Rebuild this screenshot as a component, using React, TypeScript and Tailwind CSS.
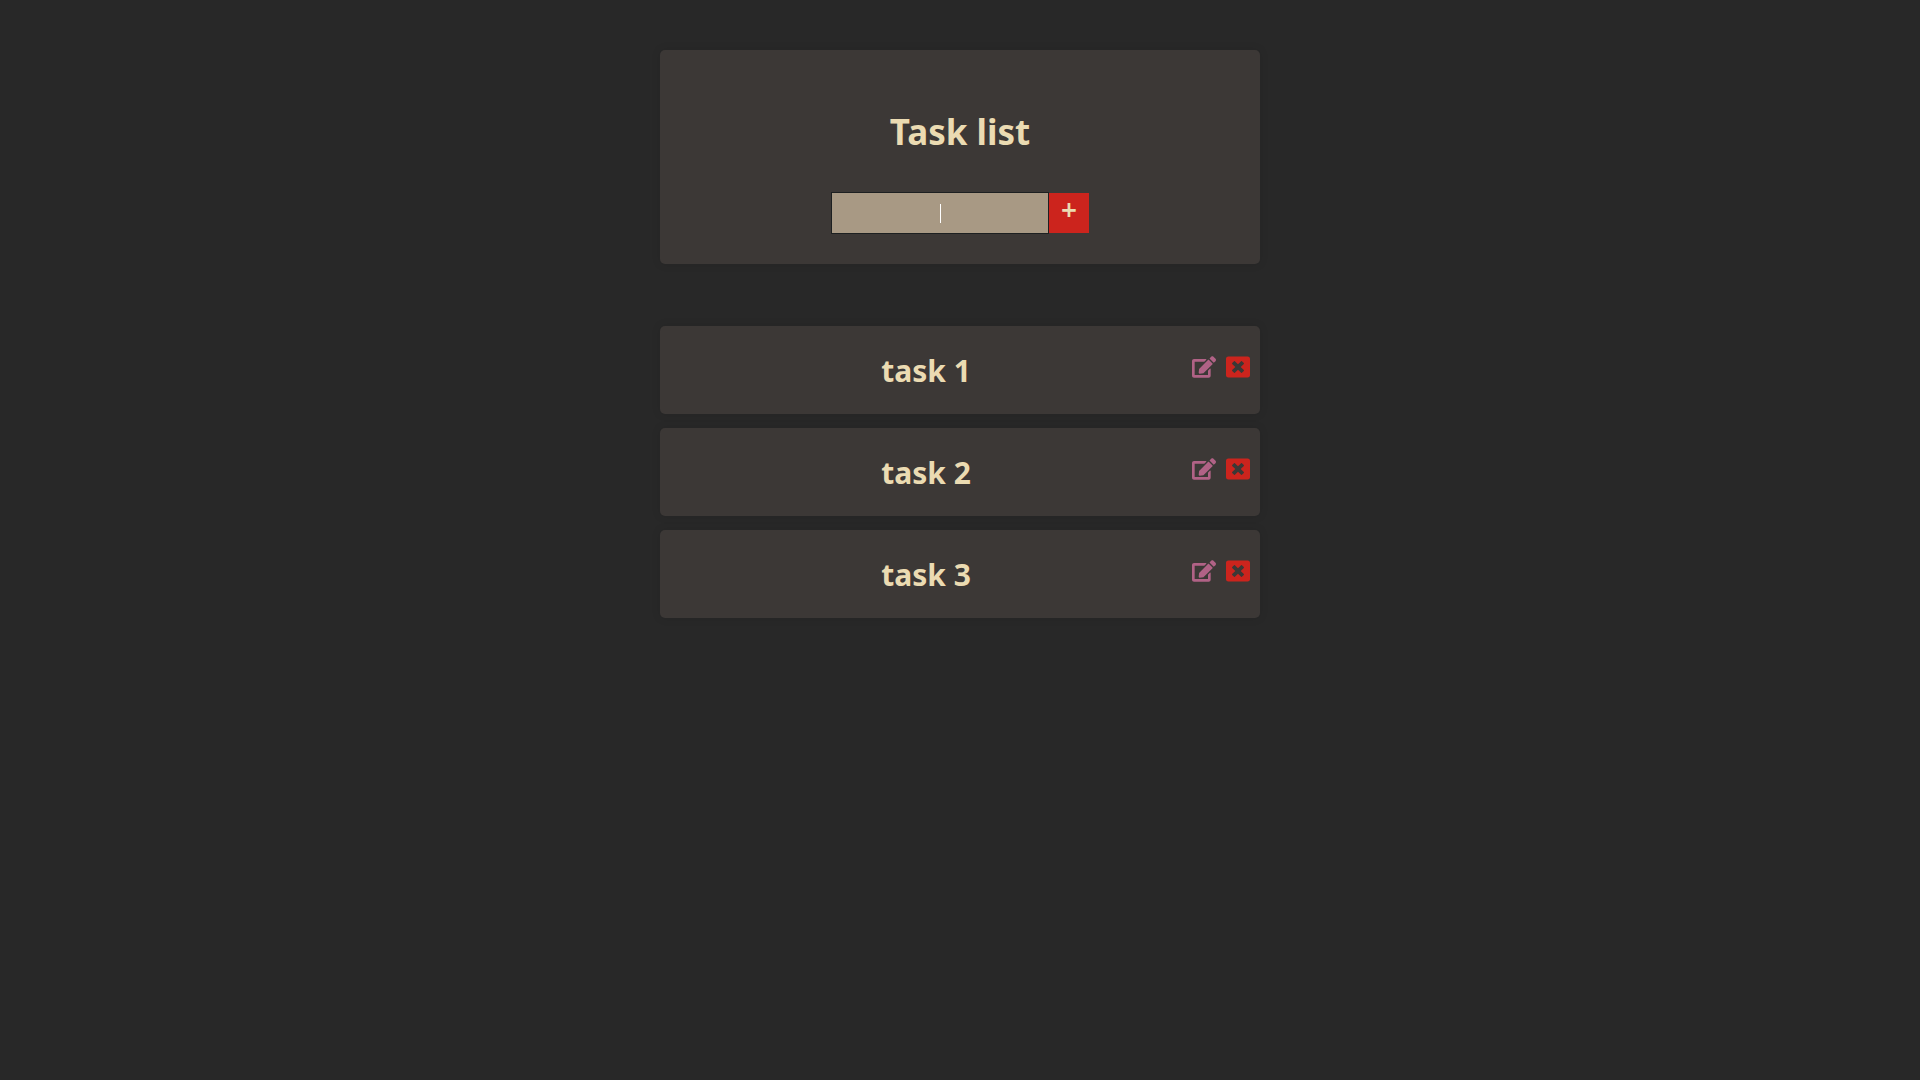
import { useState, type FormEvent } from "react";
import { FaEdit, FaWindowClose } from "react-icons/fa";

type Task = { id: number; title: string };

const initialTasks: Task[] = [
  { id: 1, title: "task 1" },
  { id: 2, title: "task 2" },
  { id: 3, title: "task 3" },
];

function TaskForm({ onAdd }: { onAdd: (title: string) => void }) {
  const [value, setValue] = useState("");

  const submit = (event: FormEvent) => {
    event.preventDefault();
    if (!value.trim()) return;
    onAdd(value.trim());
    setValue("");
  };

  return (
    <form onSubmit={submit} className="flex items-center justify-center">
      <div className="relative">
        <input
          type="text"
          aria-label="New task"
          value={value}
          onChange={(event) => setValue(event.target.value)}
          className="block h-[42px] w-[218px] border border-[#1d2021] bg-[#a89984] px-2 text-center text-base text-white outline-none"
        />
        {value === "" && (
          <span className="pointer-events-none absolute inset-0 flex items-center justify-center">
            <span className="h-[19px] w-px bg-white" />
          </span>
        )}
      </div>
      <button
        type="submit"
        aria-label="Add task"
        className="flex size-10 cursor-pointer justify-center bg-[#cc241d] text-[28px] leading-8 font-semibold text-[#ebdbb2]"
      >
        +
      </button>
    </form>
  );
}

function TaskRow({ task, onDelete }: { task: Task; onDelete: () => void }) {
  return (
    <li className="flex h-[88px] items-center rounded-[5px] bg-[#3c3836] pr-2.5 shadow-[0_0_10px_rgba(0,0,0,0.1)]">
      <h2 className="flex-1 pt-0.5 text-center text-[30px] leading-10 font-bold">{task.title}</h2>
      <div className="flex gap-2.5 pb-1.5 text-2xl">
        <button type="button" aria-label={`Edit ${task.title}`} className="cursor-pointer text-[#b16286]">
          <FaEdit />
        </button>
        <button
          type="button"
          aria-label={`Delete ${task.title}`}
          onClick={onDelete}
          className="cursor-pointer text-[#cc241d]"
        >
          <FaWindowClose />
        </button>
      </div>
    </li>
  );
}

export default function App() {
  const [tasks, setTasks] = useState(initialTasks);

  return (
    <div className="min-h-screen bg-[#282828] px-4 py-[50px] font-['Noto_Sans',sans-serif] text-[#ebdbb2]">
      <main className="mx-auto max-w-[600px]">
        <section className="rounded-[5px] bg-[#3c3836] pt-[58px] pb-[30px] shadow-[0_0_10px_rgba(0,0,0,0.1)]">
          <h1 className="mb-9 text-center text-[35px] leading-12 font-bold">Task list</h1>
          <TaskForm onAdd={(title) => setTasks([...tasks, { id: Date.now(), title }])} />
        </section>
        <ul className="mt-[62px] flex flex-col gap-3.5">
          {tasks.map((task) => (
            <TaskRow
              key={task.id}
              task={task}
              onDelete={() => setTasks(tasks.filter((item) => item.id !== task.id))}
            />
          ))}
        </ul>
      </main>
    </div>
  );
}
